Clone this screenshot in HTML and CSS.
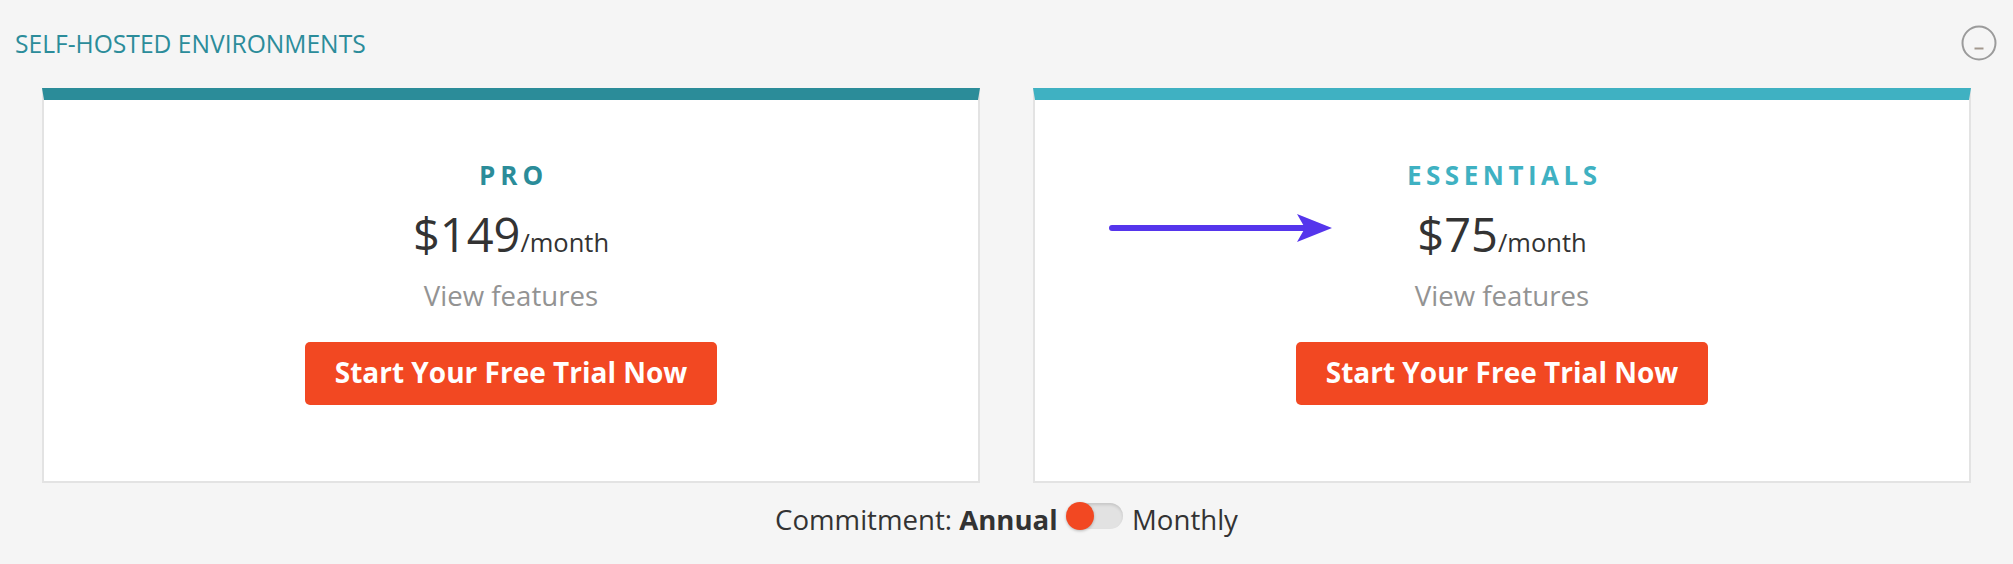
FILE: index.html
```html
<!DOCTYPE html>
<html lang="en">
<head>
    <meta charset="UTF-8">
    <meta name="viewport" content="width=device-width, initial-scale=1.0">
    <title>Self-Hosted Environments</title>
    <link rel="stylesheet" href="styles.css">
</head>
<body>
    <div class="page">
        <div class="section-header">
            <h2>SELF-HOSTED ENVIRONMENTS</h2>
            <button class="collapse-btn" aria-label="Collapse">
                <svg width="36" height="36" viewBox="0 0 36 36">
                    <circle cx="18" cy="18" r="16.5" fill="none" stroke="#9b9b9b" stroke-width="2"/>
                    <line x1="13.5" y1="23.5" x2="22.5" y2="23.5" stroke="#a3988e" stroke-width="2"/>
                </svg>
            </button>
        </div>

        <div class="plans">
            <div class="plan plan-pro">
                <h3 class="plan-name">PRO</h3>
                <div class="plan-price">$149<span class="per">/month</span></div>
                <a class="plan-features" href="#">View features</a>
                <button class="trial-btn">Start Your Free Trial Now</button>
            </div>

            <div class="plan plan-essentials">
                <svg class="pointer-arrow" width="226" height="30" viewBox="0 0 226 30">
                    <line x1="4" y1="15" x2="200" y2="15" stroke="#5535ec" stroke-width="6" stroke-linecap="round"/>
                    <polygon points="224,15 189,1 197,15 189,29" fill="#5535ec"/>
                </svg>
                <h3 class="plan-name">ESSENTIALS</h3>
                <div class="plan-price">$75<span class="per">/month</span></div>
                <a class="plan-features" href="#">View features</a>
                <button class="trial-btn">Start Your Free Trial Now</button>
            </div>
        </div>

        <div class="commitment">
            Commitment: <b>Annual</b> <span class="toggle"><span class="knob"></span></span> Monthly
        </div>
    </div>
</body>
</html>
```

FILE: styles.css
```css
body {
    font-family: "Open Sans", Arial, sans-serif;
    margin: 0;
    padding: 0;
    background-color: #f5f5f5;
    color: #333333;
}
.page {
    padding-top: 25px;
}
.section-header {
    display: flex;
    justify-content: space-between;
    align-items: center;
    padding: 0 16px 0 15px;
    height: 36px;
}
.section-header h2 {
    margin: 0;
    font-size: 24.6px;
    font-weight: 400;
    color: #2b8c9a;
}
.collapse-btn {
    border: none;
    background: none;
    padding: 0;
    width: 36px;
    height: 36px;
    cursor: pointer;
}
.collapse-btn svg {
    display: block;
}
.plans {
    display: grid;
    grid-template-columns: 1fr 1fr;
    gap: 53px;
    padding: 0 42px;
    margin-top: 27px;
}
.plan {
    position: relative;
    background: #ffffff;
    border: 2px solid #e3e3e3;
    border-top: 12px solid #2b8c99;
    padding: 57px 20px 76px;
    text-align: center;
}
.plan-essentials {
    border-top-color: #3fb1c2;
}
.plan-name {
    margin: 0;
    font-size: 26px;
    line-height: 36px;
    font-weight: 700;
    letter-spacing: 5px;
    padding-left: 5px;
    color: #2b8c99;
}
.plan-essentials .plan-name {
    color: #3fb1c2;
    letter-spacing: 4.5px;
    padding-left: 4.5px;
}
.plan-price {
    margin-top: 13px;
    font-size: 47px;
    line-height: 56px;
    color: #333333;
}
.plan-price .per {
    font-size: 25.5px;
    line-height: 1;
}
.plan-features {
    display: block;
    margin-top: 15px;
    font-size: 27.6px;
    line-height: 36px;
    color: #939393;
    text-decoration: none;
}
.trial-btn {
    margin-top: 29px;
    padding: 11px 30px 13px;
    font-family: inherit;
    font-size: 28px;
    line-height: 39px;
    font-weight: 700;
    color: #ffffff;
    background-color: #f24822;
    border: none;
    border-radius: 5px;
    cursor: pointer;
}
.pointer-arrow {
    position: absolute;
    left: 73px;
    top: 113px;
}
.commitment {
    margin-top: 18px;
    text-align: center;
    font-size: 27.6px;
    line-height: 36px;
    color: #333333;
}
.commitment b {
    font-weight: 700;
}
.toggle {
    display: inline-block;
    position: relative;
    width: 57px;
    height: 28px;
    margin: 0 2px 0 1px;
}
.toggle::before {
    content: "";
    position: absolute;
    left: 2px;
    right: 0;
    top: 1px;
    bottom: 1px;
    border-radius: 13px;
    background: #e2e2e2;
    box-shadow: inset 0 2px 3px rgba(0, 0, 0, 0.12);
}
.knob {
    position: absolute;
    left: 0;
    top: 0;
    width: 28px;
    height: 28px;
    border-radius: 50%;
    background: #f24822;
    box-shadow: 0 1px 3px rgba(0, 0, 0, 0.25);
}
```
